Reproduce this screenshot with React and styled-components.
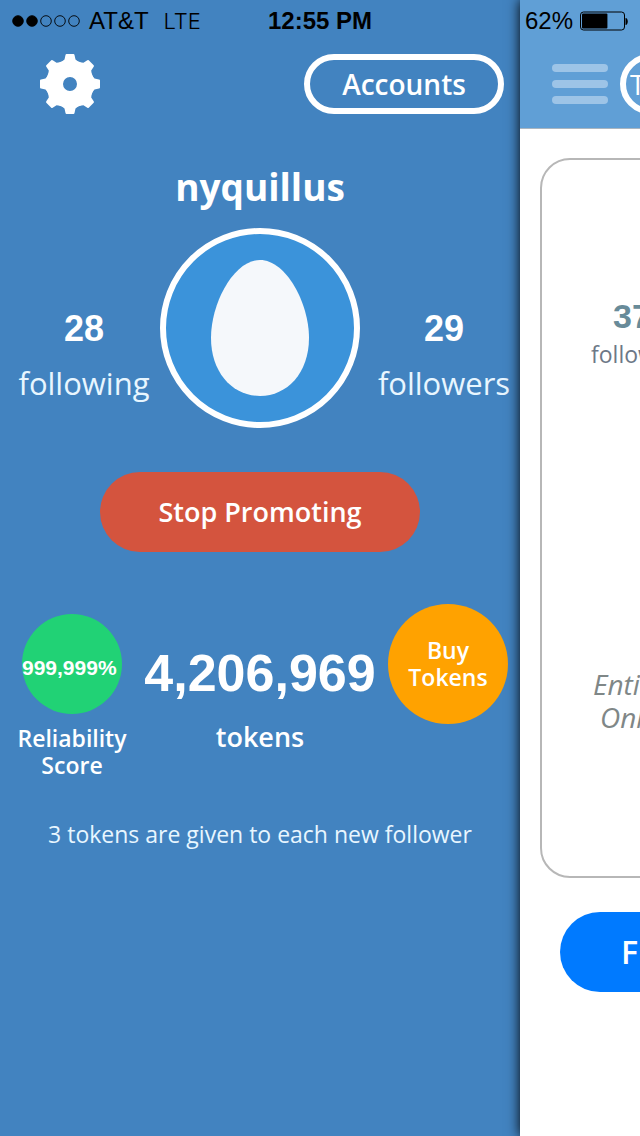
import React, { useState } from 'react';
import styled, { createGlobalStyle } from 'styled-components';

const GlobalStyle = createGlobalStyle`
  * {
    box-sizing: border-box;
  }

  body {
    margin: 0;
    background: #4283c0;
    font-family: 'Open Sans', 'Noto Sans', sans-serif;
  }

  button {
    padding: 0;
    border: none;
    background: none;
    color: inherit;
    font-family: inherit;
    cursor: pointer;
  }
`;

const Screen = styled.div`
  position: relative;
  display: flex;
  min-height: 100vh;
  overflow: hidden;
`;

const StatusBar = styled.header`
  position: absolute;
  top: 0;
  left: 0;
  right: 0;
  z-index: 2;
  display: grid;
  grid-template-columns: 1fr auto 1fr;
  align-items: center;
  height: 42px;
  padding: 0 12px;
  color: #000;
  font-family: 'Liberation Sans', Arial, sans-serif;
  font-size: 24px;
`;

const StatusGroup = styled.div`
  display: flex;
  align-items: center;
  justify-content: ${props => props.$end ? 'flex-end' : 'flex-start'};
  gap: 7px;
`;

const Network = styled.span`
  margin-left: 8px;
  font-family: Inter, sans-serif;
  font-size: 22px;
  font-weight: 300;
`;

const Clock = styled.time`
  font-size: 24px;
  font-weight: 700;
`;

const Menu = styled.aside`
  flex: 1;
  min-width: 0;
  display: flex;
  flex-direction: column;
  align-items: stretch;
  padding-top: 54px;
  background: #4283c0;
  color: #fff;
`;

const MenuTop = styled.div`
  display: flex;
  justify-content: space-between;
  padding: 0 16px 0 40px;
`;

const IconButton = styled.button`
  display: flex;
`;

const OutlineButton = styled.button`
  flex: none;
  width: 200px;
  height: 60px;
  padding: 0 4px;
  border: 6px solid #fff;
  border-radius: 30px;
  color: #fff;
  font-size: 28px;
  font-weight: ${props => props.$start ? 400 : 600};
  text-align: ${props => props.$start ? 'left' : 'center'};
`;

const Username = styled.h1`
  margin: 48px 0 16px;
  font-size: 37px;
  font-weight: 700;
  line-height: 50px;
  text-align: center;
`;

const Profile = styled.section`
  display: grid;
  grid-template-columns: 1fr 200px 1fr;
`;

const Stat = styled.div`
  display: flex;
  flex-direction: column;
  align-items: center;
  padding: 73px 0 0 8px;
  line-height: 55px;
`;

const StatValue = styled.strong`
  font-family: 'Liberation Sans', Arial, sans-serif;
  font-size: 36px;
`;

const StatLabel = styled.span`
  color: #e8f6ff;
  font-size: 31px;
`;

const Avatar = styled.div`
  display: flex;
  align-items: center;
  justify-content: center;
  height: 200px;
  border: 6px solid #fff;
  border-radius: 50%;
  background: #3b93da;
`;

const PromoteButton = styled.button`
  align-self: center;
  width: 320px;
  height: 80px;
  margin-top: 44px;
  padding-bottom: 2px;
  border-radius: 40px;
  background: #d4543e;
  font-size: 27px;
  font-weight: 600;
`;

const Wallet = styled.section`
  display: grid;
  grid-template-columns: 120px 1fr 120px;
  margin-top: 52px;
  padding: 0 12px;
  text-align: center;
`;

const Reliability = styled.div`
  display: flex;
  flex-direction: column;
  align-items: center;
  padding-top: 10px;
  font-size: 23px;
  font-weight: 600;
  line-height: 27px;
`;

const Score = styled.div`
  width: 100px;
  height: 100px;
  margin-bottom: 11px;
  border-radius: 50%;
  background: #21d275;
  font-family: 'Liberation Sans', Arial, sans-serif;
  font-size: 21px;
  font-weight: 700;
  line-height: 108px;
  text-align: left;
`;

const Tokens = styled.div`
  display: flex;
  flex-direction: column;
  padding-top: 39px;
`;

const TokenCount = styled.strong`
  font-family: 'Liberation Sans', Arial, sans-serif;
  font-size: 52px;
  line-height: 60px;
`;

const TokenLabel = styled.span`
  margin-top: 16px;
  font-size: 27px;
  font-weight: 600;
  line-height: 36px;
`;

const BuyButton = styled.button`
  width: 120px;
  height: 120px;
  border-radius: 50%;
  background: #ffa200;
  font-size: 23px;
  font-weight: 600;
  line-height: 27px;
`;

const Hint = styled.p`
  margin: 41px 0 0;
  color: #e8f6ff;
  font-size: 23px;
  line-height: 28px;
  text-align: center;
`;

// The page stays full width and is only pushed aside by the open menu.
const Peek = styled.main`
  flex: 0 0 120px;
  min-width: 0;
  background: #fff;
  box-shadow: 0 0 12px #000;
`;

const Page = styled.div`
  width: 100vw;
`;

const PageHeader = styled.div`
  display: flex;
  gap: 12px;
  height: 129px;
  padding: 54px 32px 0;
  border-bottom: 1px solid #a9b5c0;
  background: #609fd6;
`;

const MenuToggle = styled.button`
  display: flex;
  flex-direction: column;
  justify-content: center;
  gap: 8px;
  height: 60px;
`;

const Bar = styled.span`
  width: 56px;
  height: 8px;
  border-radius: 4px;
  background: #9dc4e7;
`;

const Card = styled.article`
  height: 720px;
  margin: 29px 20px 34px;
  padding: 128px 49px 0;
  border: 2px solid #b7b7b7;
  border-radius: 30px;
`;

const CardStat = styled.div`
  display: flex;
  flex-direction: column;
  color: #6d7887;
`;

const CardValue = styled.strong`
  padding-left: 22px;
  color: #688b99;
  font-family: 'Liberation Sans', Arial, sans-serif;
  font-size: 34px;
  line-height: 56px;
`;

const CardLabel = styled.span`
  font-size: 23px;
  line-height: 20px;
`;

const Note = styled.p`
  display: flex;
  flex-direction: column;
  margin: 304px 0 0;
  color: #7f8787;
  font-size: 28px;
  font-style: italic;
  line-height: 33px;
`;

const NoteLine = styled.span`
  padding-left: ${props => props.$indent ? '9px' : '2px'};
`;

const FollowButton = styled.button`
  width: calc(100% - 80px);
  height: 80px;
  margin: 0 40px;
  padding: 0 0 2px 61px;
  border-radius: 40px;
  background: #007aff;
  color: #fff;
  font-size: 32px;
  font-weight: 600;
  text-align: left;
`;

const TEETH = [0, 45, 90, 135, 180, 225, 270, 315];

const SignalDots = ({ strength }) => (
  <svg width="70" height="14" viewBox="0 0 70 14" role="img" aria-label="Signal">
    {[0, 1, 2, 3, 4].map(i => (
      <circle
        key={i}
        cx={6 + i * 14}
        cy="7"
        r="5.3"
        fill={i < strength ? '#000' : 'none'}
        stroke="#000"
        strokeWidth="0.9"
      />
    ))}
  </svg>
);

const Battery = ({ level }) => (
  <svg width="48" height="20" viewBox="0 0 48 20" role="img" aria-label="Battery">
    <rect x="0.5" y="1" width="44" height="18" rx="3" fill="none" stroke="#000" />
    <rect x="2" y="2.500" width={41 * level} height="15" rx="1" fill="#000" />
    <path d="M45.500 7c3 0 3 7 0 7z" fill="#000" />
  </svg>
);

const Gear = () => (
  <svg width="60" height="60" viewBox="0 0 60 60" aria-hidden="true">
    <circle cx="30" cy="30" r="15.5" fill="none" stroke="#fff" strokeWidth="17" />
    {TEETH.map(angle => (
      <path
        key={angle}
        d="M20 9L24.500 5.500L25.500 1Q25.700 0 26.500 0H33.500Q34.300 0 34.500 1L35.500 5.500L40 9Z"
        fill="#fff"
        transform={`rotate(${angle} 30 30)`}
      />
    ))}
  </svg>
);

const Egg = () => (
  <svg width="98" height="136" viewBox="0 0 98 136" aria-hidden="true">
    <path
      d="M49 0C75 0 98 43 98 78C98 113 76 136 49 136C22 136 0 113 0 78C0 43 23 0 49 0Z"
      fill="#f5f8fb"
    />
  </svg>
);

const App = () => {
  const [user] = useState({
    name: 'nyquillus',
    following: 28,
    followers: 29,
    score: 999999,
    tokens: 4206969,
    perFollower: 3,
  });

  return (
    <>
      <GlobalStyle />
      <Screen>
        <StatusBar>
          <StatusGroup>
            <SignalDots strength={2} />
            <span>AT&amp;T</span>
            <Network>LTE</Network>
          </StatusGroup>
          <Clock>12:55 PM</Clock>
          <StatusGroup $end>
            <span>62%</span>
            <Battery level={0.62} />
          </StatusGroup>
        </StatusBar>

        <Menu>
          <MenuTop>
            <IconButton type="button" aria-label="Settings">
              <Gear />
            </IconButton>
            <OutlineButton type="button">Accounts</OutlineButton>
          </MenuTop>

          <Username>{user.name}</Username>

          <Profile>
            <Stat>
              <StatValue>{user.following}</StatValue>
              <StatLabel>following</StatLabel>
            </Stat>
            <Avatar>
              <Egg />
            </Avatar>
            <Stat>
              <StatValue>{user.followers}</StatValue>
              <StatLabel>followers</StatLabel>
            </Stat>
          </Profile>

          <PromoteButton type="button">Stop Promoting</PromoteButton>

          <Wallet>
            <Reliability>
              <Score>{user.score.toLocaleString('en-US')}%</Score>
              <span>Reliability</span>
              <span>Score</span>
            </Reliability>
            <Tokens>
              <TokenCount>{user.tokens.toLocaleString('en-US')}</TokenCount>
              <TokenLabel>tokens</TokenLabel>
            </Tokens>
            <BuyButton type="button">
              Buy
              <br />
              Tokens
            </BuyButton>
          </Wallet>

          <Hint>{user.perFollower} tokens are given to each new follower</Hint>
        </Menu>

        <Peek>
          <Page>
            <PageHeader>
              <MenuToggle type="button" aria-label="Close menu">
                <Bar />
                <Bar />
                <Bar />
              </MenuToggle>
              <OutlineButton type="button" $start>T</OutlineButton>
            </PageHeader>
            <Card>
              <CardStat>
                <CardValue>37</CardValue>
                <CardLabel>follow</CardLabel>
              </CardStat>
              <Note>
                <NoteLine>Enti</NoteLine>
                <NoteLine $indent>Onl</NoteLine>
              </Note>
            </Card>
            <FollowButton type="button">F</FollowButton>
          </Page>
        </Peek>
      </Screen>
    </>
  );
};

export default App;
